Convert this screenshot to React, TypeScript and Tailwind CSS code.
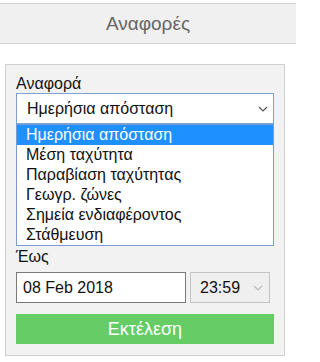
const reports = [
  "Ημερήσια απόσταση",
  "Μέση ταχύτητα",
  "Παραβίαση ταχύτητας",
  "Γεωγρ. ζώνες",
  "Σημεία ενδιαφέροντος",
  "Στάθμευση",
];

function Chevron({ color }: { color: string }) {
  return (
    <svg width="10" height="6" viewBox="0 0 10 6" fill="none">
      <polyline points="1,1 5,5 9,1" stroke={color} strokeWidth="1.2" />
    </svg>
  );
}

export default function App() {
  const selected = 0;

  return (
    <div className="w-[296px] h-[362px] bg-white pt-[3px] font-['Liberation_Sans',Arial,sans-serif] text-[#111]">
      {/* Header */}
      <div className="h-[41px] border-y border-[#d0d0d0] bg-[#f0f0f0] flex items-center justify-center">
        <span className="text-[19px] text-[#666] leading-none">Αναφορές</span>
      </div>

      {/* Panel */}
      <div className="mt-[20px] ml-[5px] w-[280px] border border-[#d0d0d0] bg-[#f2f2f2] px-[10px] pt-[10px] pb-[11px]">
        <div className="text-[16px] leading-[18px]">Αναφορά</div>

        <div className="h-[31px] border border-[#7da2ce] bg-white pl-[10px] pr-[5px] flex items-center justify-between text-[16px]">
          <span>{reports[selected]}</span>
          <Chevron color="#555" />
        </div>

        <ul className="border border-[#7a9cd6] bg-white">
          {reports.map((r, i) => (
            <li
              key={r}
              className={`h-[20px] pl-[9px] text-[16px] leading-[20px] ${
                i === selected ? "bg-[#1e90ff] text-white" : "text-[#111]"
              }`}
            >
              {r}
            </li>
          ))}
        </ul>

        <div className="mt-[2px] text-[16px] leading-[18px]">Έως</div>

        <div className="mt-[6px] flex gap-[4px]">
          <div className="w-[170px] h-[31px] border border-[#7a7a7a] bg-white pl-[6px] flex items-center text-[16px]">
            08 Feb 2018
          </div>
          <div className="w-[80px] h-[31px] border border-[#c3c3c3] bg-[#efefef] pl-[9px] pr-[6px] flex items-center justify-between text-[16px]">
            <span>23:59</span>
            <Chevron color="#bbb" />
          </div>
        </div>

        <button className="mt-[11px] w-full h-[30px] bg-[#66cc66] text-white text-[18px] flex items-center justify-center">
          Εκτέλεση
        </button>
      </div>
    </div>
  );
}
